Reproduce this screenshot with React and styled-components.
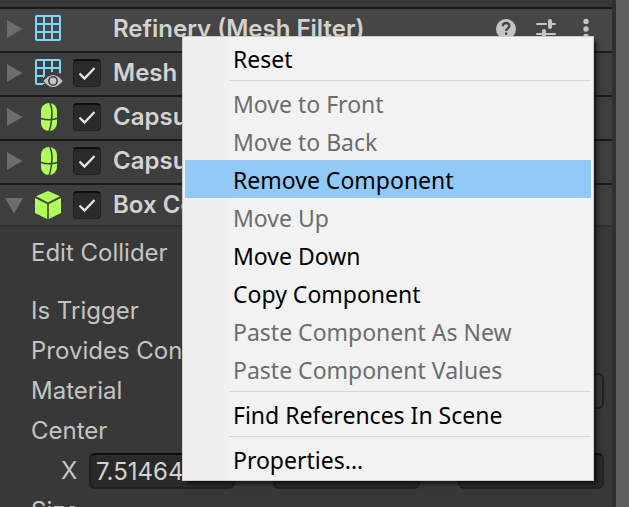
import React, { useState } from "react";
import styled, { createGlobalStyle } from "styled-components";

const GlobalStyle = createGlobalStyle`
  * {
    box-sizing: border-box;
  }
  body {
    margin: 0;
    background: #383838;
    font-family: Inter, "Liberation Sans", sans-serif;
    font-size: 24px;
    line-height: 30px;
    color: #c4c4c4;
  }
  button,
  input {
    font: inherit;
    color: inherit;
  }
`;

const Page = styled.main`
  position: relative;
  display: flex;
  height: 100vh;
  overflow: hidden;
`;

const Inspector = styled.section`
  flex: 1;
  min-width: 0;
  padding-top: 7px;
  border-right: 4px solid #303030;
  background: #383838;
`;

const Gutter = styled.div`
  flex: none;
  width: 13px;
  background: #5f5f5f;
`;

const Header = styled.header`
  display: flex;
  align-items: center;
  height: ${(props) => (props.$open ? "42px" : "44px")};
  padding: 0 14px ${(props) => (props.$open ? "0" : "2px")} 4px;
  border-top: 2px solid #1a1a1a;
  background: ${(props) => (props.$hover ? "#464646" : "#3e3e3e")};
`;

const Foldout = styled.button`
  display: flex;
  flex: none;
  width: 31px;
  padding: 0;
  border: 0;
  background: none;
`;

const IconSlot = styled.span`
  display: flex;
  flex: none;
  width: 38px;
`;

const ToggleSlot = styled.span`
  flex: none;
  width: 40px;
  height: 28px;
`;

const Title = styled.label`
  flex: 1;
  min-width: 0;
  overflow: hidden;
  white-space: nowrap;
  font-weight: 600;
  color: #d2d2d2;
`;

const Tools = styled.div`
  display: flex;
  gap: 16px;
`;

const ToolButton = styled.button`
  display: flex;
  padding: 0;
  border: 0;
  background: none;
`;

const ToggleBox = styled.span`
  position: relative;
  display: block;
  width: 28px;
  height: 28px;

  input {
    display: block;
    width: 28px;
    height: 28px;
    margin: 0;
    appearance: none;
    border: 1px solid #212121;
    border-top: 2px solid #0d0d0d;
    border-radius: 4px;
    background: #2a2a2a;
  }

  svg {
    position: absolute;
    top: 0;
    left: 0;
    pointer-events: none;
  }
`;

const Properties = styled.div`
  padding-top: 6px;
  border-top: 2px solid #303030;
`;

const PropertyRow = styled.div`
  display: grid;
  grid-template-columns: 240px 1fr;
  align-items: center;
  height: 40px;
  padding: 0 8px 0 31px;
  margin-bottom: ${(props) => (props.$spaced ? "18px" : "0")};
  white-space: nowrap;
`;

const VectorRow = styled.div`
  display: grid;
  grid-template-columns: repeat(3, 1fr);
  gap: 10px;
  align-items: center;
  height: 40px;
  padding: 0 8px 0 61px;
`;

const Axis = styled.label`
  display: flex;
  align-items: center;

  span {
    flex: none;
    width: 28px;
  }
`;

const Field = styled.input`
  flex: 1;
  min-width: 0;
  width: 100%;
  height: 36px;
  padding: 0 5px;
  border: 2px solid #212121;
  border-top-color: ${(props) => (props.$flat ? "#212121" : "#0d0d0d")};
  border-radius: 6px;
  background: ${(props) => (props.$flat ? "#383838" : "#2a2a2a")};
  color: #d2d2d2;
`;

const EditButton = styled.button`
  width: 66px;
  height: 36px;
  border: 1px solid #303030;
  border-radius: 6px;
  background: #585858;
`;

const Menu = styled.div`
  position: absolute;
  top: 36px;
  left: 182px;
  width: 412px;
  padding: 2px;
  border: 1px solid #cccccc;
  background: linear-gradient(to right, #f0f0f0 46px, #f2f2f2 46px);
  box-shadow: 4px 4px 4px -1px rgba(0, 0, 0, 0.6);
`;

const MenuItem = styled.button`
  display: block;
  width: 100%;
  height: 38px;
  padding: 2px 0 0 48px;
  border: 0;
  background: transparent;
  font-family: "Noto Sans", "Noto Sans CJK KR", sans-serif;
  font-size: 23px;
  line-height: 36px;
  text-align: left;
  white-space: nowrap;
  color: #000000;

  &:disabled {
    color: #6d6d6d;
  }

  ${(props) => props.$active && "background: #91c9f7;"}
`;

const Separator = styled.hr`
  height: 1px;
  margin: 3px 0 3px 44px;
  border: 0;
  background: #d7d7d7;
`;

const ArrowIcon = ({ open }) => (
  <svg width="20" height="20" viewBox="0 0 20 20" fill="#6d6d6d">
    {open ? <path d="M1 3h18l-9 15.500z" /> : <path d="M3 1v18l15.500-9z" />}
  </svg>
);

const MeshIcon = () => (
  <svg width="28" height="28" viewBox="0 0 28 28" fill="none" stroke="#7fd6fd" strokeWidth="2">
    <rect x="1" y="1" width="24" height="24" rx="1" />
    <path d="M9 1v24M17 1v24M1 9h24M1 17h24" />
  </svg>
);

const MeshEyeIcon = () => (
  <svg width="30" height="28" viewBox="0 0 30 28">
    <path
      d="M8 25H2a1 1 0 0 1-1-1V2a1 1 0 0 1 1-1h22a1 1 0 0 1 1 1v13M9 1v24M17 1v13M1 9h24M1 17h9"
      fill="none"
      stroke="#7fd6fd"
      strokeWidth="2"
    />
    <path d="M6 22Q18 5 30 19v6q-10 8-24-3z" fill="#3e3e3e" />
    <path d="M8.500 22Q18 10 27.700 22Q18 34 8.500 22z" fill="#c4c4c4" />
    <circle cx="18" cy="22" r="5" fill="#3e3e3e" />
    <circle cx="18" cy="22" r="3.400" fill="#c4c4c4" />
  </svg>
);

const CapsuleIcon = () => (
  <svg width="28" height="28" viewBox="0 0 28 28">
    <rect x="6" y="0" width="16" height="28" rx="8" fill="#b0fd59" />
    <path
      d="M15 0q3 7 1.500 16.500Q16 24 14 28M6 15.500q8 2.500 16 0"
      fill="none"
      stroke="#3e3e3e"
      strokeWidth="1.500"
    />
  </svg>
);

const BoxIcon = () => (
  <svg width="28" height="28" viewBox="0 0 28 28" fill="#b0fd59">
    <path d="M13 0l12 5.200-12 6.200L1 5.200z" />
    <path d="M0 7l12.200 6v15L0 22z" />
    <path d="M26 7l-12.200 6v15L26 22z" />
  </svg>
);

const HelpIcon = () => (
  <svg width="24" height="24" viewBox="0 0 24 24">
    <circle cx="12" cy="12" r="10" fill="#c4c4c4" />
    <path
      d="M8.800 9.200c0-4.200 6.600-4.200 6.600-.4 0 2.500-3.300 2.600-3.300 5.200"
      fill="none"
      stroke="#464646"
      strokeWidth="2.400"
    />
    <rect x="11" y="15.500" width="2.300" height="2.300" fill="#464646" />
  </svg>
);

const PresetIcon = () => (
  <svg width="24" height="24" viewBox="0 0 24 24" fill="none" stroke="#c4c4c4" strokeLinecap="round">
    <path d="M3 7h9M19 7h2M3 17h3M12 17h9" strokeWidth="2" />
    <path d="M16 4v6M10 14v6" strokeWidth="4" />
    <path d="M16 7h4M4 17h4" strokeWidth="2" />
  </svg>
);

const MoreIcon = () => (
  <svg width="24" height="24" viewBox="0 0 24 24" fill="#c4c4c4">
    <circle cx="12" cy="4.500" r="2.700" />
    <circle cx="12" cy="12" r="2.700" />
    <circle cx="12" cy="19.500" r="2.700" />
  </svg>
);

const Toggle = ({ id, defaultChecked }) => {
  const [checked, setChecked] = useState(defaultChecked);
  return (
    <ToggleBox>
      <input
        id={id}
        type="checkbox"
        checked={checked}
        onChange={(e) => setChecked(e.target.checked)}
      />
      {checked && (
        <svg width="28" height="28" viewBox="0 0 28 28">
          <path d="M6.500 14.500l5 5L21.500 9" fill="none" stroke="#e4e4e4" strokeWidth="2.400" />
        </svg>
      )}
    </ToggleBox>
  );
};

const components = [
  { id: "mesh-filter", title: "Refinery (Mesh Filter)", icon: MeshIcon, hover: true },
  { id: "mesh-renderer", title: "Mesh Renderer", icon: MeshEyeIcon, toggle: true },
  { id: "capsule-1", title: "Capsule Collider", icon: CapsuleIcon, toggle: true },
  { id: "capsule-2", title: "Capsule Collider", icon: CapsuleIcon, toggle: true },
  { id: "box", title: "Box Collider", icon: BoxIcon, toggle: true, open: true },
];

const menuGroups = [
  [{ label: "Reset" }],
  [
    { label: "Move to Front", disabled: true },
    { label: "Move to Back", disabled: true },
    { label: "Remove Component", active: true },
    { label: "Move Up", disabled: true },
    { label: "Move Down" },
    { label: "Copy Component" },
    { label: "Paste Component As New", disabled: true },
    { label: "Paste Component Values", disabled: true },
  ],
  [{ label: "Find References In Scene" }],
  [{ label: "Properties..." }],
];

const ComponentHeader = ({ id, title, icon: Icon, toggle, open, hover }) => (
  <Header $hover={hover} $open={open}>
    <Foldout aria-label={`Fold ${title}`} aria-expanded={!!open}>
      <ArrowIcon open={open} />
    </Foldout>
    <IconSlot>
      <Icon />
    </IconSlot>
    <ToggleSlot>{toggle && <Toggle id={id} defaultChecked />}</ToggleSlot>
    <Title as={toggle ? "label" : "span"} htmlFor={toggle ? id : undefined}>
      {title}
    </Title>
    {hover && (
      <Tools>
        <ToolButton aria-label="Help">
          <HelpIcon />
        </ToolButton>
        <ToolButton aria-label="Presets">
          <PresetIcon />
        </ToolButton>
        <ToolButton aria-label="More">
          <MoreIcon />
        </ToolButton>
      </Tools>
    )}
  </Header>
);

const BoxColliderProperties = () => (
  <Properties>
    <PropertyRow $spaced>
      <span>Edit Collider</span>
      <EditButton aria-label="Edit Collider" />
    </PropertyRow>
    <PropertyRow>
      <label htmlFor="is-trigger">Is Trigger</label>
      <Toggle id="is-trigger" defaultChecked={false} />
    </PropertyRow>
    <PropertyRow>
      <label htmlFor="contacts">Provides Contacts</label>
      <Toggle id="contacts" defaultChecked={false} />
    </PropertyRow>
    <PropertyRow>
      <label htmlFor="material">Material</label>
      <Field id="material" $flat />
    </PropertyRow>
    <PropertyRow>
      <span>Center</span>
    </PropertyRow>
    <VectorRow>
      <Axis>
        <span>X</span>
        <Field defaultValue="7.51464" />
      </Axis>
      <Axis>
        <span>Y</span>
        <Field />
      </Axis>
      <Axis>
        <span>Z</span>
        <Field />
      </Axis>
    </VectorRow>
    <PropertyRow>
      <span>Size</span>
    </PropertyRow>
  </Properties>
);

const ContextMenu = () => (
  <Menu role="menu">
    {menuGroups.map((group, index) => (
      <React.Fragment key={group[0].label}>
        {index > 0 && <Separator />}
        {group.map((item) => (
          <MenuItem
            key={item.label}
            role="menuitem"
            disabled={item.disabled}
            $active={item.active}
          >
            {item.label}
          </MenuItem>
        ))}
      </React.Fragment>
    ))}
  </Menu>
);

const App = () => {
  return (
    <Page>
      <GlobalStyle />
      <Inspector>
        {components.map((component) => (
          <ComponentHeader key={component.id} {...component} />
        ))}
        <BoxColliderProperties />
      </Inspector>
      <Gutter />
      <ContextMenu />
    </Page>
  );
};

export default App;
